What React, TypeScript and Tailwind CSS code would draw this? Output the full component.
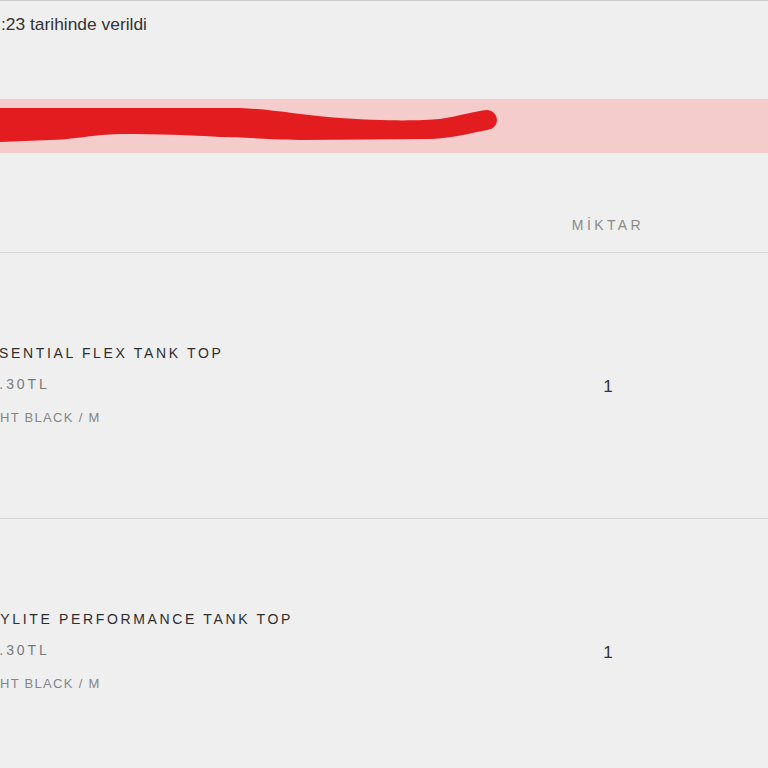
const items = [
  { name: "ESSENTIAL FLEX TANK TOP", price: "91.30TL", variant: "NIGHT BLACK / M", qty: 1 },
  { name: "DRYLITE PERFORMANCE TANK TOP", price: "91.30TL", variant: "NIGHT BLACK / M", qty: 1 },
];

const Scribble = () => (
  <svg width="520" height="54" viewBox="0 0 520 54" className="block">
    <path
      d="M0,9 L240,9 C270,10 300,16 340,19 C380,22 420,22 440,20 C460,17 475,12 487,11 A10,10 0 0 1 487,31 C470,34 455,39 430,40 L300,41 C260,40 240,38 220,38 C190,36 160,35 120,35 C90,36 70,41 50,41 L0,43 Z"
      fill="#e31c1f"
    />
  </svg>
);

const ItemRow = ({ name, price, variant, qty }: { name: string; price: string; variant: string; qty: number }) => (
  <div className="flex h-[266px] items-center border-b border-[#d6d6d6]">
    <div className="flex-1 -ml-[25px] flex flex-col">
      <span className="text-[14px] leading-[20px] tracking-[2.65px] text-[#2e2e2e] whitespace-nowrap">{name}</span>
      <span className="mt-[11px] ml-[3px] text-[14px] leading-[20px] tracking-[2.9px] text-[#7a7a7a]">{price}</span>
      <span className="mt-[14px] -ml-[2px] text-[13px] leading-[20px] tracking-[1.3px] text-[#858585]">{variant}</span>
    </div>
    <div className="w-[160px] mt-[3px] text-center text-[17px] leading-[20px] text-[#333]">{qty}</div>
    <div className="w-[80px]" />
  </div>
);

export default function App() {
  return (
    <div className="w-[768px] h-[768px] overflow-hidden bg-[#efefef] border-t border-[#cbcbcb] font-['Liberation_Sans',Arial,sans-serif]">
      <div className="pt-[13px] flex text-[17.4px] leading-[20px] text-[#333] whitespace-nowrap">
        <span className="-ml-[200px] w-[200px] shrink-0 text-right">Sipariş 12.03.2023 14</span>
        <span className="pl-[1px]">:23 tarihinde verildi</span>
      </div>

      <div className="mt-[65px] h-[54px] bg-[#f5cccc]">
        <Scribble />
      </div>

      <div className="flex h-[100px] items-end pb-[17px] border-b border-[#d6d6d6]">
        <div className="flex-1" />
        <div className="w-[160px] text-center text-[14px] leading-[20px] tracking-[3.4px] text-[#8a8a8a]">MİKTAR</div>
        <div className="w-[80px]" />
      </div>

      {items.map((it) => (
        <ItemRow key={it.name} {...it} />
      ))}
    </div>
  );
}
